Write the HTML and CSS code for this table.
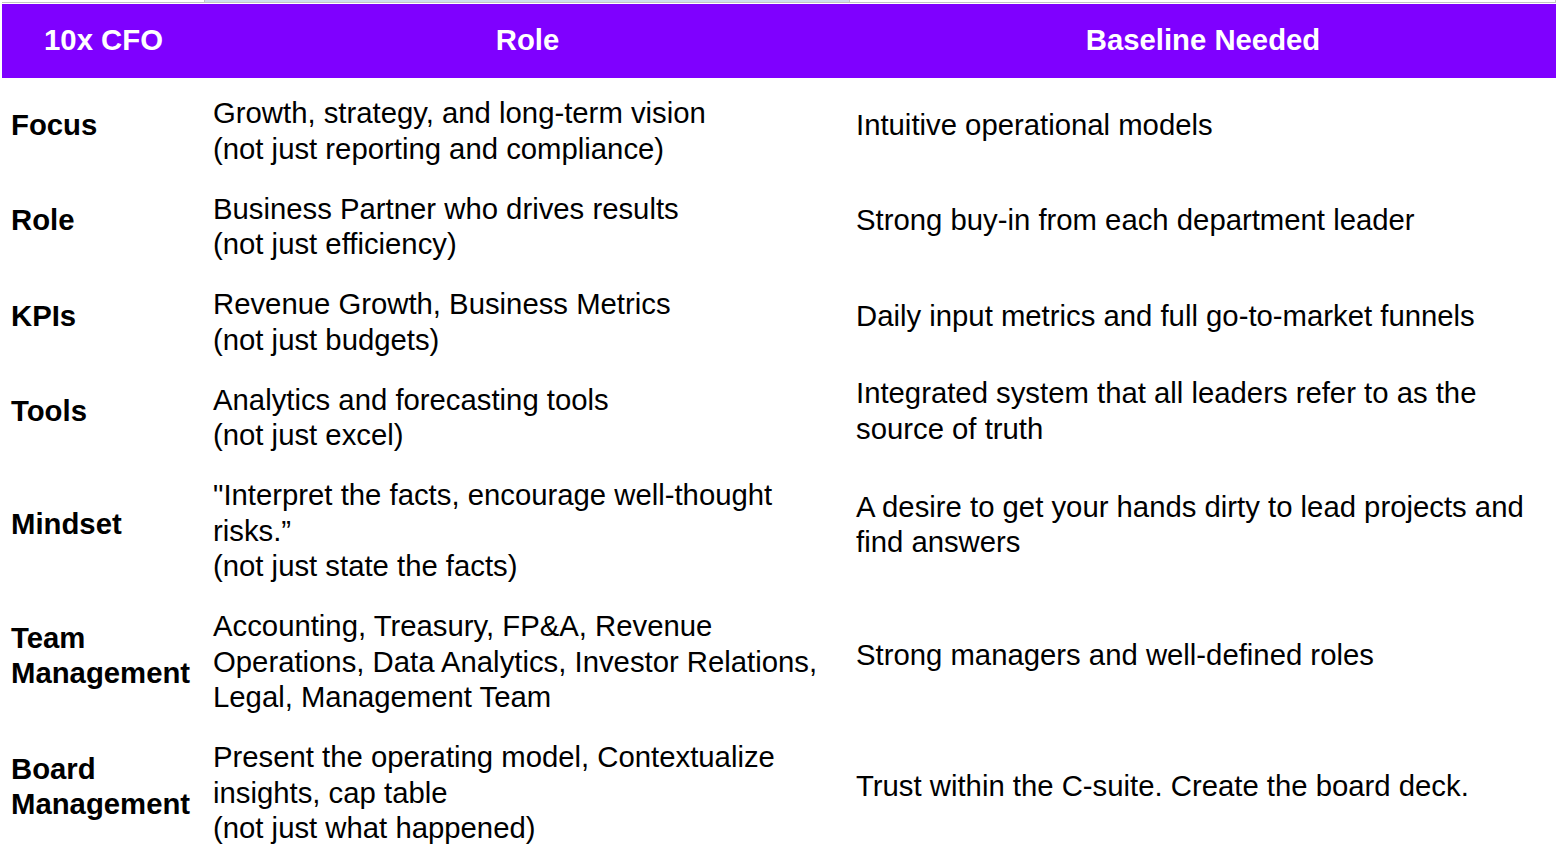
FILE: index.html
```html
<!DOCTYPE html>
<html>
<head>
<meta charset="utf-8">
<link rel="stylesheet" href="styles.css">
</head>
<body>
<div class="sheet">
  <div class="topstrip">
    <div class="ts ts1"></div>
    <div class="ts ts2"></div>
    <div class="ts ts3"></div>
  </div>
  <div class="grid">
    <div class="hd">10x CFO</div>
    <div class="hd">Role</div>
    <div class="hd">Baseline Needed</div>

    <div class="c1">Focus</div>
    <div class="c2">Growth, strategy, and long-term vision<br>(not just reporting and compliance)</div>
    <div class="c3">Intuitive operational models</div>

    <div class="c1">Role</div>
    <div class="c2">Business Partner who drives results<br>(not just efficiency)</div>
    <div class="c3">Strong buy-in from each department leader</div>

    <div class="c1">KPIs</div>
    <div class="c2">Revenue Growth, Business Metrics<br>(not just budgets)</div>
    <div class="c3">Daily input metrics and full go-to-market funnels</div>

    <div class="c1">Tools</div>
    <div class="c2">Analytics and forecasting tools<br>(not just excel)</div>
    <div class="c3">Integrated system that all leaders refer to as the<br>source of truth</div>

    <div class="c1">Mindset</div>
    <div class="c2">"Interpret the facts, encourage well-thought<br>risks.”<br>(not just state the facts)</div>
    <div class="c3">A desire to get your hands dirty to lead projects and<br>find answers</div>

    <div class="c1">Team<br>Management</div>
    <div class="c2">Accounting, Treasury, FP&amp;A, Revenue<br>Operations, Data Analytics, Investor Relations,<br>Legal, Management Team</div>
    <div class="c3">Strong managers and well-defined roles</div>

    <div class="c1">Board<br>Management</div>
    <div class="c2">Present the operating model, Contextualize<br>insights, cap table<br>(not just what happened)</div>
    <div class="c3">Trust within the C-suite. Create the board deck.</div>
  </div>
</div>
</body>
</html>
```

FILE: styles.css
```css
html, body {
  margin: 0;
  padding: 0;
  background: #ffffff;
}
body {
  width: 1558px;
  height: 860px;
  overflow: hidden;
  font-family: "Liberation Sans", Arial, Helvetica, sans-serif;
  color: #000000;
}
.sheet {
  padding-left: 2px;
  width: 1554px;
}
.topstrip {
  display: grid;
  grid-template-columns: 203px 645px 706px;
  height: 4px;
}
.ts {
  box-sizing: border-box;
  border-bottom: 1px solid #c4c4c4;
  border-right: 1px solid #c4c4c4;
  height: 3px;
}
.ts2 {
  background: #cfdcee;
}
.grid {
  display: grid;
  grid-template-columns: 203px 645px 706px;
  font-size: 29.3px;
  line-height: 35.5px;
}
.hd {
  background: #7f00ff;
  color: #ffffff;
  font-weight: bold;
  text-align: center;
  height: 74px;
  display: flex;
  align-items: center;
  justify-content: center;
  padding-bottom: 2px;
  box-sizing: border-box;
}
.c1 {
  font-weight: bold;
  display: flex;
  align-items: center;
  padding-left: 9px;
  padding-bottom: 3px;
}
.c2 {
  padding: 17px 2px 7.5px 8px;
}
.c3 {
  display: flex;
  align-items: center;
  padding-left: 6px;
  padding-bottom: 3px;
}
```
